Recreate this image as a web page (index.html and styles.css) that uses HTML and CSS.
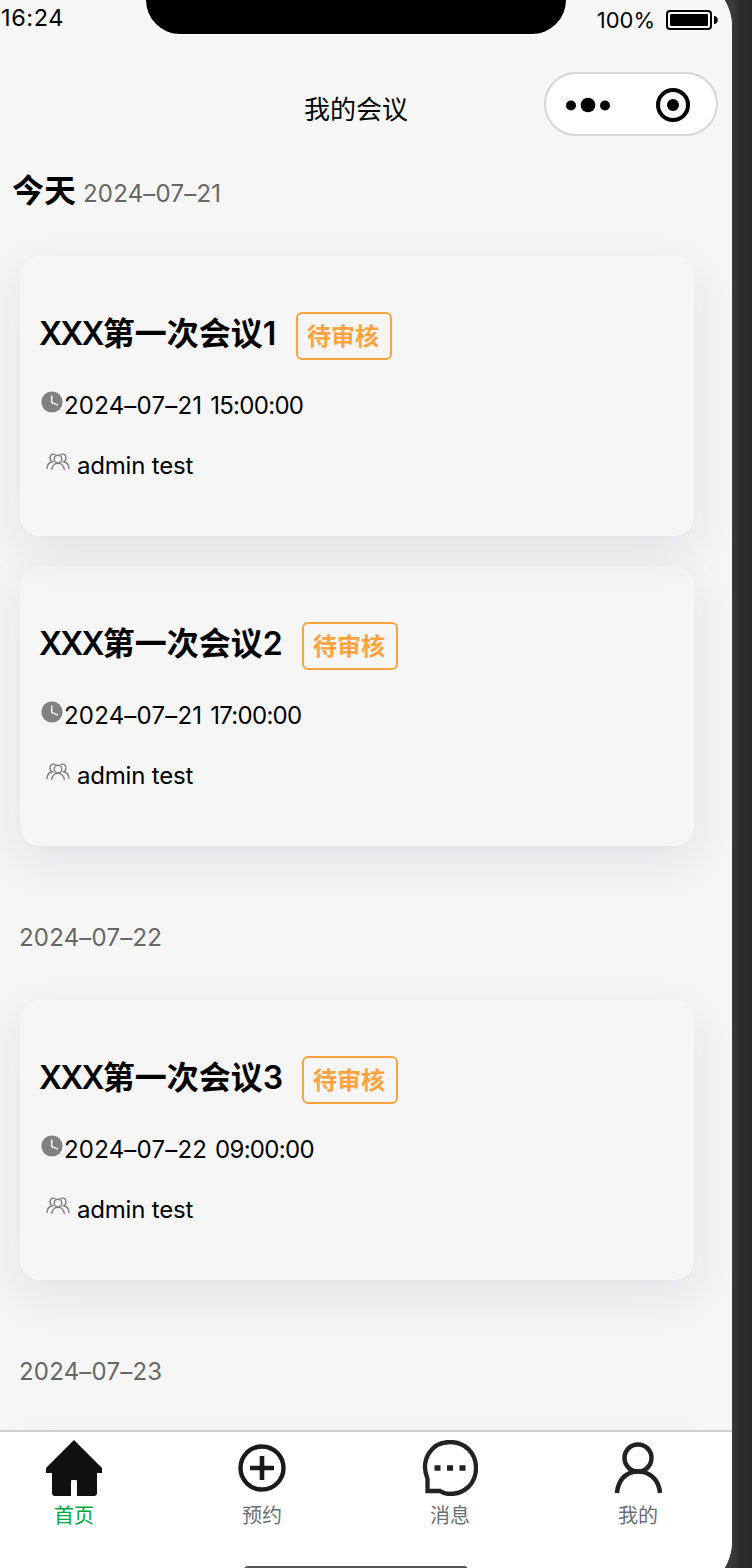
FILE: index.html
```html
<!DOCTYPE html>
<html lang="zh-CN">
<head>
    <meta charset="UTF-8">
    <meta name="viewport" content="width=device-width, initial-scale=1.0">
    <title>我的会议</title>
    <link rel="stylesheet" href="styles.css">
</head>
<body>
    <svg width="0" height="0" class="symbols">
        <symbol id="clock" viewBox="0 0 22 22">
            <circle cx="11" cy="11" r="10.6" fill="#808080"/>
            <path d="M10.7 4.5v7l6.3 2.6" fill="none" stroke="#f6f6f6" stroke-width="1.5"/>
        </symbol>
        <symbol id="people" viewBox="0 0 24 18">
            <g fill="none" stroke="#808080" stroke-width="1.4" stroke-linecap="round">
                <circle cx="12" cy="6" r="3.8"/>
                <path d="M5.7 16.4c.4-3.7 3-6.2 6.3-6.2s5.9 2.5 6.3 6.2"/>
                <path d="M9 1.5C6.5.3 4 2 4 5c0 1.7 1 3.1 2.5 3.8C3.5 9.3 1.2 12 1 15.5"/>
                <path d="M15 1.5C17.5.3 20 2 20 5c0 1.7-1 3.1-2.5 3.8 3 .5 5.3 3.2 5.5 6.700"/>
            </g>
        </symbol>
    </svg>

    <div class="phone">
        <header class="header">
            <div class="status-bar">
                <span class="time">16:24</span>
                <div class="notch"></div>
                <div class="power">
                    <span class="percent">100%</span>
                    <svg class="battery" width="52" height="20" viewBox="0 0 52 20">
                        <rect x="1" y="1" width="44" height="18" rx="3" fill="none" stroke="#000" stroke-width="2"/>
                        <rect x="4" y="4" width="38" height="12" rx="1" fill="#000"/>
                        <path d="M48 6c5 0 5 8 0 8z" fill="#000"/>
                    </svg>
                </div>
            </div>
            <div class="nav-bar">
                <h1 class="nav-title">我的会议</h1>
                <div class="capsule">
                    <svg width="46" height="16" viewBox="0 0 46 16">
                        <circle cx="6" cy="8.5" r="5"/>
                        <circle cx="23" cy="8" r="7.3"/>
                        <circle cx="40" cy="8.5" r="5"/>
                    </svg>
                    <svg width="34" height="34" viewBox="0 0 34 34">
                        <circle cx="17" cy="17" r="15" fill="none" stroke="#000" stroke-width="4"/>
                        <circle cx="17" cy="17" r="6"/>
                    </svg>
                </div>
            </div>
        </header>

        <main class="content">
            <div class="day today"><b>今天</b><span class="date">2024–07–21</span></div>

            <div class="card">
                <div class="card-title"><h2 class="narrow"><span class="latin">XXX</span>第一次会议1</h2><span class="tag">待审核</span></div>
                <div class="row"><svg class="clock"><use href="#clock"/></svg><span class="when">2024–07–21 <span class="hour">15:00:00</span></span></div>
                <div class="row"><svg class="people"><use href="#people"/></svg><span class="who">admin test</span></div>
            </div>

            <div class="card">
                <div class="card-title"><h2><span class="latin">XXX</span>第一次会议2</h2><span class="tag">待审核</span></div>
                <div class="row"><svg class="clock"><use href="#clock"/></svg><span class="when">2024–07–21 <span class="hour">17:00:00</span></span></div>
                <div class="row"><svg class="people"><use href="#people"/></svg><span class="who">admin test</span></div>
            </div>

            <div class="day"><span class="date">2024–07–22</span></div>

            <div class="card">
                <div class="card-title"><h2><span class="latin">XXX</span>第一次会议3</h2><span class="tag">待审核</span></div>
                <div class="row"><svg class="clock"><use href="#clock"/></svg><span class="when">2024–07–22 <span class="hour">09:00:00</span></span></div>
                <div class="row"><svg class="people"><use href="#people"/></svg><span class="who">admin test</span></div>
            </div>

            <div class="day"><span class="date">2024–07–23</span></div>
            <div class="card"></div>
        </main>

        <nav class="tab-bar">
            <a class="tab active">
                <svg width="56" height="56" viewBox="0 0 56 56">
                    <path d="M28 0L57 29v4H51v20q0 3-3 3H31V41q0-1-1-1h-4q-1 0-1 1v15H9q-3 0-3-3V33H-1v-4z" fill="#111"/>
                </svg>
                <span>首页</span>
            </a>
            <a class="tab">
                <svg width="56" height="56" viewBox="0 0 56 56" fill="none" stroke="#1a1a1a">
                    <circle cx="28" cy="28" r="21.5" stroke-width="4.4"/>
                    <path d="M28 16v24M16 28h24" stroke-width="4.6"/>
                </svg>
                <span>预约</span>
            </a>
            <a class="tab">
                <svg width="56" height="56" viewBox="0 0 56 56" fill="none" stroke="#222">
                    <path d="M5.5 51V39C-2 20 9 2 28 2c15 0 26 11 26 26S43 54 28 54c-4 0-7-1-10-3z" stroke-width="4.3"/>
                    <path d="M12.5 28h6M25 28h6M37.5 28h6" stroke-width="5.5"/>
                </svg>
                <span>消息</span>
            </a>
            <a class="tab">
                <svg width="56" height="56" viewBox="0 0 56 56" fill="none" stroke="#222" stroke-width="4.5">
                    <circle cx="28" cy="18" r="13.5"/>
                    <path d="M7 53C8 40 16 31.5 28 31.5S49 40 50 53"/>
                </svg>
                <span>我的</span>
            </a>
            <div class="home-indicator"></div>
        </nav>
    </div>
</body>
</html>
```

FILE: styles.css
```css
* {
    margin: 0;
    padding: 0;
    box-sizing: border-box;
}

body {
    height: 1568px;
    overflow: hidden;
    background: linear-gradient(90deg, #3a3a3a 732px, #2b2b2b 742px, #292929 752px);
    font-family: Inter, "Noto Sans CJK SC", sans-serif;
    color: #000;
}

.symbols {
    position: absolute;
}

/* the rounded corners are partly outside of the window */
.phone {
    width: 732px;
    height: 1620px;
    margin-top: -26px;
    padding-top: 26px;
    border-radius: 0 53px 53px 0;
    background: #f6f6f6;
    overflow: hidden;
    display: flex;
    flex-direction: column;
}

.header {
    height: 152px;
    flex: none;
    background: #f7f7f7;
}

.status-bar {
    height: 72px;
    display: flex;
    align-items: flex-start;
}

.time {
    width: 146px;
    padding: 4px 0 0 1px;
    font-size: 23.5px;
    line-height: 28px;
    letter-spacing: 0.6px;
}

.notch {
    width: 420px;
    height: 34px;
    border-radius: 0 0 38px 38px;
    background: #000;
    box-shadow: 0 2px 0 #fff;
}

.power {
    flex: 1;
    display: flex;
    align-items: center;
    justify-content: flex-end;
    gap: 11px;
    padding: 6px 14px 0 0;
}

.percent {
    font-size: 22px;
    line-height: 28px;
}

.nav-bar {
    display: flex;
    justify-content: flex-end;
    padding-right: 14px;
}

.nav-title {
    width: 104px;
    margin-right: 136px;
    font-size: 26px;
    font-weight: 400;
    line-height: 76px;
    height: 64px;
    white-space: nowrap;
}

.capsule {
    width: 174px;
    height: 64px;
    display: flex;
    align-items: center;
    justify-content: space-between;
    padding: 2px 26px 0 19px;
    border: 2px solid #d5d5d5;
    border-radius: 32px;
    background: #fff;
}

.content {
    height: 1278px;
    flex: none;
    overflow: hidden;
}

.day {
    height: 124px;
    padding: 44px 0 0 19px;
    line-height: 36px;
}

.day.today {
    height: 104px;
    padding: 21px 0 0 12px;
}

.day b {
    margin-right: 7px;
    font-size: 32px;
    font-weight: 700;
}

.date {
    font-size: 24px;
    letter-spacing: 0.2px;
    color: #666;
}

.card {
    width: 674px;
    height: 280px;
    margin: 0 0 30px 20px;
    padding: 56px 19px 0;
    border-radius: 20px;
    box-shadow: 0 16px 48px rgba(10, 30, 45, 0.095);
}

.card-title {
    height: 64px;
    display: flex;
    align-items: flex-start;
}

.card-title h2 {
    width: 243px;
    margin-right: 20px;
    font-size: 32px;
    font-weight: 600;
    line-height: 43px;
    white-space: nowrap;
}

.card-title h2.narrow {
    width: 237px;
}

.latin {
    letter-spacing: -1.8px;
}

.tag {
    width: 96px;
    height: 48px;
    padding-right: 2px;
    border: 2px solid #ffa340;
    border-radius: 6px;
    color: #ffa340;
    font-size: 24px;
    font-weight: 700;
    line-height: 45px;
    text-align: center;
}

.row {
    height: 60px;
    display: flex;
    font-size: 24px;
    line-height: 60px;
    white-space: nowrap;
}

.when {
    letter-spacing: 0.2px;
}

.hour {
    margin-left: 1px;
    letter-spacing: -0.7px;
}

.who {
    letter-spacing: -0.2px;
}

.clock {
    width: 22px;
    height: 22px;
    margin: 15px 1px 0 2px;
}

.people {
    width: 24px;
    height: 18px;
    margin: 17px 7px 0 7px;
}

.tab-bar {
    position: relative;
    flex: 1;
    display: flex;
    justify-content: space-between;
    padding: 8px 66px 0 46px;
    border-top: 2px solid #cfcfcf;
    background: #fff;
}

.tab {
    width: 56px;
    color: #6b6e75;
    font-size: 20px;
    line-height: 40px;
    text-align: center;
}

.tab svg {
    display: block;
}

.tab.active {
    color: #00a63a;
}

.home-indicator {
    position: absolute;
    top: 134px;
    left: 244px;
    width: 224px;
    height: 8px;
    border-radius: 4px;
    background: #555;
}
```
